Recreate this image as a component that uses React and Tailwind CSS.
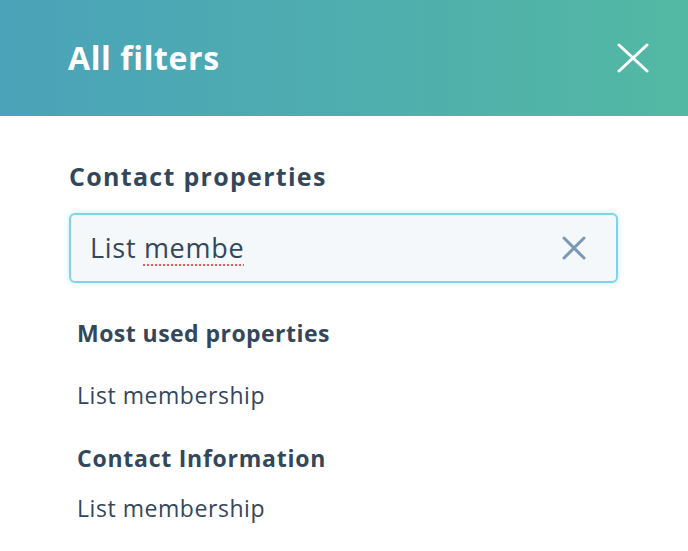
export default function App() {
  const font = { fontFamily: '"Open Sans", "Lato", sans-serif' };
  return (
    <div className="w-[688px] h-[551px] bg-white overflow-hidden text-[#33475b]" style={font}>
      <div className="h-[116px] flex items-center justify-between pl-[68px] pr-[38px] bg-gradient-to-r from-[#4aa3b9] to-[#53b8a3]">
        <h1 className="text-[32px] font-bold text-white tracking-[0.6px]">All filters</h1>
        <button className="w-[34px] h-[34px] flex items-center justify-center">
          <svg width="32" height="30" viewBox="0 0 32 30" fill="none" stroke="white" strokeWidth="3" strokeLinecap="round">
            <path d="M2 2L30 28M30 2L2 28" />
          </svg>
        </button>
      </div>

      <div className="pl-[69px] pr-[70px] pt-[44px]">
        <h2 className="text-[25px] font-bold leading-[32px] tracking-[1.3px]">Contact properties</h2>

        <div className="mt-[21px] h-[70px] rounded-[6px] border-2 border-[#7fd3e7] bg-[#f5f8fa] shadow-[0_0_6px_rgba(0,208,228,0.25)] flex items-center justify-between pl-[19px] pr-[30px]">
          <span className="text-[27px] tracking-[0.7px]">
            List{" "}
            <span className="underline decoration-dotted decoration-[#f2545b] decoration-2 underline-offset-[7px]">membe</span>
          </span>
          <svg width="24" height="24" viewBox="0 0 24 24" fill="none" stroke="#7c98b6" strokeWidth="3" strokeLinecap="round">
            <path d="M2 2L22 22M22 2L2 22" />
          </svg>
        </div>

        <div className="pl-[8px] pt-[34px]">
          <h3 className="text-[23px] font-bold leading-[32px] tracking-[0.45px]">Most used properties</h3>
          <p className="text-[23px] leading-[32px] mt-[30px] tracking-[0.55px]">List membership</p>
          <h3 className="text-[23px] font-bold leading-[32px] mt-[31px] tracking-[0.75px]">Contact Information</h3>
          <p className="text-[23px] leading-[32px] mt-[18px] tracking-[0.55px]">List membership</p>
        </div>
      </div>
    </div>
  );
}
